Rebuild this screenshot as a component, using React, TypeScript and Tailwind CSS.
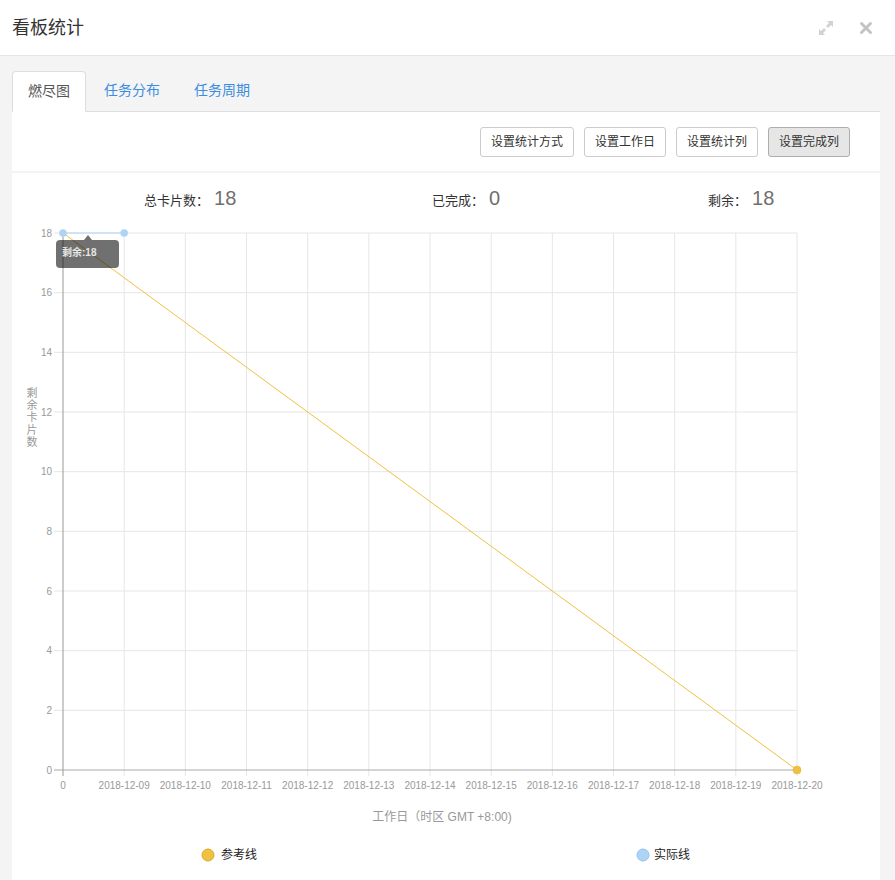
import React from "react";

const F = "font-['Liberation_Sans','Noto_Sans_CJK_SC',sans-serif]";

function Chart() {
  const x0 = 51;
  const x1 = 785;
  const yTop = 10;
  const yBot = 547;
  const dates = [
    "0",
    "2018-12-09",
    "2018-12-10",
    "2018-12-11",
    "2018-12-12",
    "2018-12-13",
    "2018-12-14",
    "2018-12-15",
    "2018-12-16",
    "2018-12-17",
    "2018-12-18",
    "2018-12-19",
    "2018-12-20",
  ];
  const xs = dates.map((_, i) => x0 + ((x1 - x0) * i) / 12);
  const yVals = [0, 2, 4, 6, 8, 10, 12, 14, 16, 18];
  const yOf = (v: number) => yBot - ((yBot - yTop) * v) / 18;
  const yChars = ["剩", "余", "卡", "片", "数"];
  return (
    <svg width="868" height="657" className="block">
      {xs.map((x, i) =>
        i === 0 ? null : (
          <line key={"v" + i} x1={x} y1={yTop} x2={x} y2={yBot + 6} stroke="#e6e6e6" strokeWidth="1" />
        )
      )}
      {yVals.map((v) =>
        v === 0 ? null : (
          <line key={"h" + v} x1={42} y1={yOf(v)} x2={x1} y2={yOf(v)} stroke="#e6e6e6" strokeWidth="1" />
        )
      )}
      <line x1={42} y1={yBot} x2={x1} y2={yBot} stroke="#aaaaaa" strokeWidth="1" />
      <line x1={x0} y1={yTop} x2={x0} y2={yBot + 6} stroke="#999999" strokeWidth="1" />
      {yVals.map((v) => (
        <text
          key={"yl" + v}
          x={40}
          y={yOf(v) + 3.5}
          textAnchor="end"
          fontSize="10"
          fill="#999"
          fontFamily="'Liberation Sans', sans-serif"
        >
          {v}
        </text>
      ))}
      {dates.map((d, i) => (
        <text
          key={"xl" + i}
          x={xs[i]}
          y={566}
          textAnchor="middle"
          fontSize="10"
          fill="#999"
          fontFamily="'Liberation Sans', sans-serif"
        >
          {d}
        </text>
      ))}
      {yChars.map((c, i) => (
        <text
          key={"yc" + i}
          x={20}
          y={174 + i * 12.2}
          textAnchor="middle"
          fontSize="11"
          fill="#999"
          fontFamily="'Noto Sans CJK SC', sans-serif"
        >
          {c}
        </text>
      ))}
      <text
        x={430}
        y={598}
        textAnchor="middle"
        fontSize="12"
        fill="#999"
        fontFamily="'Liberation Sans', 'Noto Sans CJK SC', sans-serif"
      >
        工作日（时区 GMT +8:00)
      </text>
      <line x1={x0} y1={yTop} x2={x1} y2={yBot} stroke="#f0c040" strokeWidth="1" />
      <circle cx={x1} cy={yBot} r="4" fill="#f0c040" stroke="#e3b33a" strokeWidth="0.5" />
      <line x1={x0} y1={yTop} x2={xs[1]} y2={yTop} stroke="#aed4f5" strokeWidth="1" />
      <circle cx={x0} cy={yTop} r="3.8" fill="#aed4f5" />
      <circle cx={xs[1]} cy={yTop} r="3.8" fill="#aed4f5" />
      <path d="M72 17 L76 12 L80 17 Z" fill="#000" fillOpacity="0.56" />
      <rect x={44} y={17} width={63} height={28} rx={4} fill="#000" fillOpacity="0.56" />
      <text
        x={50}
        y={32.5}
        fontSize="10"
        fontWeight="bold"
        fill="#e6e6e6"
        fontFamily="'Liberation Sans', 'Noto Sans CJK SC', sans-serif"
      >
        剩余:18
      </text>
      <circle cx={196} cy={632} r="6" fill="#f0c040" stroke="#dcab2c" strokeWidth="1" />
      <text x={209} y={636} fontSize="12" fill="#222" fontFamily="'Noto Sans CJK SC', sans-serif">
        参考线
      </text>
      <circle cx={631} cy={632} r="6" fill="#aed4f5" stroke="#93c3ee" strokeWidth="1" />
      <text x={642} y={636} fontSize="12" fill="#222" fontFamily="'Noto Sans CJK SC', sans-serif">
        实际线
      </text>
    </svg>
  );
}

function Stat({ label, value, w }: { label: string; value: string; w: string }) {
  return (
    <div className={`${w} flex items-baseline`}>
      <span className="text-[13px] text-[#333] font-['Noto_Sans_CJK_SC',sans-serif]">{label}</span>
      <span className="text-[20px] text-[#6f6f6f] ml-[5px] font-['Liberation_Sans',sans-serif]">{value}</span>
    </div>
  );
}

export default function App() {
  const buttons = ["设置统计方式", "设置工作日", "设置统计列", "设置完成列"];
  return (
    <div className={`w-[895px] h-[880px] bg-[#f4f4f4] flex flex-col overflow-hidden ${F}`}>
      <div className="h-[56px] shrink-0 bg-white border-b border-[#e5e5e5] flex items-center justify-between pl-[12px] pr-[22px]">
        <span className="text-[18px] text-[#333] leading-none">看板统计</span>
        <div className="flex items-center gap-[24px]">
          <svg width="18" height="18" viewBox="0 0 18 18">
            <path d="M10 2 L16 2 L16 8 L14 6 L11 9 L9 7 L12 4 Z" fill="#d2d2d2" />
            <path d="M8 16 L2 16 L2 10 L4 12 L7 9 L9 11 L6 14 Z" fill="#d2d2d2" />
          </svg>
          <svg width="14" height="14" viewBox="0 0 14 14">
            <path d="M2.5 2.5 L11.5 11.5 M11.5 2.5 L2.5 11.5" stroke="#c4c4c4" strokeWidth="3" strokeLinecap="round" />
          </svg>
        </div>
      </div>
      <div className="flex-1 flex flex-col pt-[15px] pl-[12px] pr-[15px]">
        <div className="h-[41px] shrink-0 flex items-end border-b border-[#dddddd]">
          <div className="h-[41px] px-[15px] mb-[-1px] bg-white border border-[#dddddd] border-b-white rounded-t-[4px] flex items-center text-[14px] text-[#555]">
            燃尽图
          </div>
          <div className="h-[41px] ml-[2px] px-[16px] flex items-center text-[14px] text-[#3c8dde]">任务分布</div>
          <div className="h-[41px] ml-[2px] px-[16px] flex items-center text-[14px] text-[#3c8dde]">任务周期</div>
        </div>
        <div className="flex-1 flex flex-col bg-white">
          <div className="h-[59px] shrink-0 flex items-start justify-end gap-[10px] pt-[15px] pr-[30px]">
            {buttons.map((b, i) => (
              <div
                key={b}
                className={`h-[30px] px-[10px] flex items-center text-[12px] text-[#333] rounded-[3px] border ${
                  i === 3 ? "bg-[#e6e6e6] border-[#adadad]" : "bg-white border-[#cccccc]"
                }`}
              >
                {b}
              </div>
            ))}
          </div>
          <div className="h-[2px] shrink-0 bg-[#f3f3f3]" />
          <div className="flex-1 flex flex-col">
            <div className="h-[50px] shrink-0 flex items-center pl-[132px]">
              <Stat label="总卡片数：" value="18" w="w-[288px]" />
              <Stat label="已完成：" value="0" w="w-[276px]" />
              <Stat label="剩余：" value="18" w="" />
            </div>
            <Chart />
          </div>
        </div>
      </div>
    </div>
  );
}
